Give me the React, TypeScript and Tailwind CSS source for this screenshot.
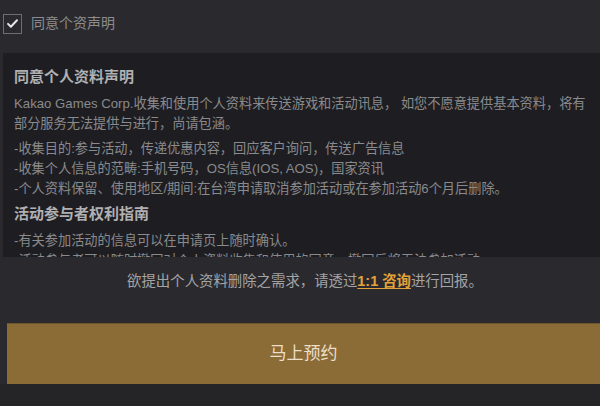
import React from 'react';

const font = { fontFamily: '"Liberation Sans", "Noto Sans CJK SC", sans-serif' };

const App: React.FC = () => {
  return (
    <div className="w-[600px] h-[406px] overflow-hidden bg-[#2a2a2e] flex flex-col" style={font}>
      {/* agree checkbox */}
      <div className="h-[53px] flex items-center pl-[3px] gap-[9px] pb-[6px]">
        <div className="w-[19px] h-[20px] border border-[#6e6e72] flex items-center justify-center">
          <svg viewBox="0 0 16 16" className="w-[13px] h-[13px]" fill="none" stroke="#e8e8e8" strokeWidth="2.4" strokeLinecap="round" strokeLinejoin="round">
            <path d="M2.5 8.5l3.5 3.5 7.5-8" />
          </svg>
        </div>
        <span className="text-[14px] text-[#8d8d90]">同意个资声明</span>
      </div>

      {/* scrolling terms panel */}
      <div className="ml-[3px] h-[204px] overflow-hidden bg-[#1e1e22] pl-[11px] pt-[12px] text-[13.2px] leading-[20px] text-[#8a8a8d] whitespace-nowrap">
        <div className="text-[15px] leading-[24px] font-bold text-[#b0b0b3] mb-[5px]">同意个人资料声明</div>
        <div>Kakao Games Corp.收集和使用个人资料来传送游戏和活动讯息， 如您不愿意提供基本资料，将有</div>
        <div>部分服务无法提供与进行，尚请包涵。</div>
        <div className="mt-[5px]">-收集目的:参与活动，传递优惠内容，回应客户询问，传送广告信息</div>
        <div>-收集个人信息的范畴:手机号码，OS信息(IOS, AOS)，国家资讯</div>
        <div>-个人资料保留、使用地区/期间:在台湾申请取消参加活动或在参加活动6个月后删除。</div>
        <div className="text-[15px] leading-[24px] font-bold text-[#b0b0b3] mt-[3px] mb-[5px]">活动参与者权利指南</div>
        <div>-有关参加活动的信息可以在申请页上随时确认。</div>
        <div>-活动参与者可以随时撤回对个人资料收集和使用的同意，撤回后将无法参加活动。</div>
      </div>

      {/* deletion notice */}
      <div className="h-[66px] flex items-center justify-center pb-[16px] pl-[10px] text-[14.4px] text-[#a4a4a7]">
        <span>
          欲提出个人资料删除之需求，请透过
          <a className="text-[#e3a33a] font-bold underline underline-offset-2">1:1 咨询</a>
          进行回报。
        </span>
      </div>

      {/* reserve button */}
      <div className="ml-[7px] h-[61px] bg-[#8b6b36] border-t border-[#6d5530] flex items-center justify-center">
        <span className="text-[17px] text-[#ecdfc8]">马上预约</span>
      </div>
      <div className="flex-1 bg-[#252528]" />
    </div>
  );
};

export default App;
